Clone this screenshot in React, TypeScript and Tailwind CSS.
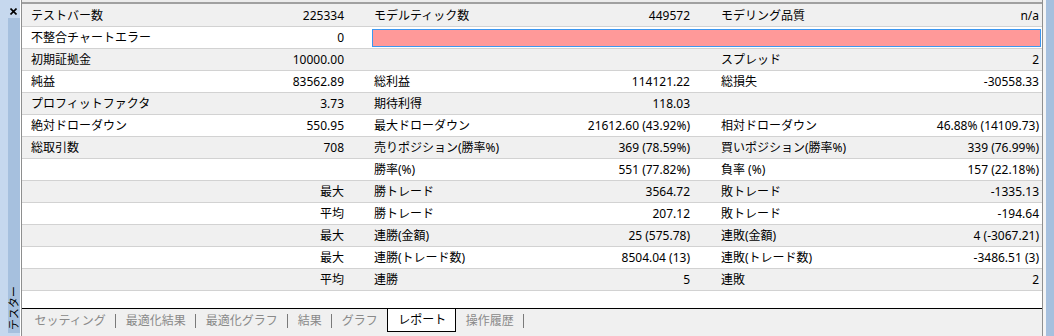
import React from 'react'

type Cell = [string, string]
type Row = { a: Cell; b?: Cell; c?: Cell; pink?: boolean }

const rows: Row[] = [
  { a: ['テストバー数', '225334'], b: ['モデルティック数', '449572'], c: ['モデリング品質', 'n/a'] },
  { a: ['不整合チャートエラー', '0'], pink: true },
  { a: ['初期証拠金', '10000.00'], b: ['', ''], c: ['スプレッド', '2'] },
  { a: ['純益', '83562.89'], b: ['総利益', '114121.22'], c: ['総損失', '-30558.33'] },
  { a: ['プロフィットファクタ', '3.73'], b: ['期待利得', '118.03'], c: ['', ''] },
  { a: ['絶対ドローダウン', '550.95'], b: ['最大ドローダウン', '21612.60 (43.92%)'], c: ['相対ドローダウン', '46.88% (14109.73)'] },
  { a: ['総取引数', '708'], b: ['売りポジション(勝率%)', '369 (78.59%)'], c: ['買いポジション(勝率%)', '339 (76.99%)'] },
  { a: ['', ''], b: ['勝率(%)', '551 (77.82%)'], c: ['負率 (%)', '157 (22.18%)'] },
  { a: ['', '最大'], b: ['勝トレード', '3564.72'], c: ['敗トレード', '-1335.13'] },
  { a: ['', '平均'], b: ['勝トレード', '207.12'], c: ['敗トレード', '-194.64'] },
  { a: ['', '最大'], b: ['連勝(金額)', '25 (575.78)'], c: ['連敗(金額)', '4 (-3067.21)'] },
  { a: ['', '最大'], b: ['連勝(トレード数)', '8504.04 (13)'], c: ['連敗(トレード数)', '-3486.51 (3)'] },
  { a: ['', '平均'], b: ['連勝', '5'], c: ['連敗', '2'] },
]

const tabs = ['セッティング', '最適化結果', '最適化グラフ', '結果', 'グラフ']

const App = () => {
  return (
    <div className="w-[1054px] h-[336px] flex bg-[#f0f0f0] overflow-hidden text-[12px] text-black font-['Noto_Sans','Noto_Sans_CJK_JP',sans-serif]">
      {/* left dock strip */}
      <div className="w-[20px] flex flex-col bg-[#c6d8ee]">
        <div className="h-[18px] flex items-start pt-[8px] pl-[10px]">
          <svg width="7" height="7" viewBox="0 0 7 7">
            <path d="M0.5 0.5 L6.5 6.5 M6.5 0.5 L0.5 6.5" stroke="#000" strokeWidth="1.6" />
          </svg>
        </div>
        <div className="flex-1 ml-[8px] bg-[#a6c0de] flex flex-col justify-end items-center pb-[3px]">
          <span className="[writing-mode:vertical-rl] [text-orientation:sideways] rotate-180 text-[11px] leading-[12px] text-black">テスター</span>
        </div>
        <div className="h-[3px]" />
      </div>
      <div className="w-[1px] bg-white" />

      {/* main panel */}
      <div className="w-[1022px] flex flex-col border-x border-[#8e8f8f]">
        <div className="h-[2px] bg-[#ececec]" />
        <div className="h-[2px] bg-[#a0a0a0]" />
        <div className="h-[1px] bg-[#f0f0f0]" />
        {rows.map((r, i) => (
          <div
            key={i}
            className={`h-[22px] grid grid-cols-[340px_346px_334px] items-center border-b border-[#d2d2d2] ${i % 2 === 0 ? 'bg-[#f0f0f0]' : 'bg-white'}`}
          >
            <div className="flex justify-between pl-[9px] pr-[18px]">
              <span>{r.a[0]}</span>
              <span>{r.a[1]}</span>
            </div>
            {r.pink ? (
              <div className="col-span-2 pl-[10px] pr-[1px]">
                <div className="h-[18px] bg-[#ff9999] border border-[#3c97f0]" />
              </div>
            ) : (
              <>
                <div className="flex justify-between pl-[12px] pr-[18px]">
                  <span>{r.b?.[0]}</span>
                  <span>{r.b?.[1]}</span>
                </div>
                <div className="flex justify-between pl-[13px] pr-[3px]">
                  <span>{r.c?.[0]}</span>
                  <span>{r.c?.[1]}</span>
                </div>
              </>
            )}
          </div>
        ))}
        <div className="h-[17px] bg-white" />

        {/* tab bar */}
        <div className="h-[24px] border-t border-black flex items-start pl-[3px] text-[#8a8a8a]">
          {tabs.map((t, i) => (
            <div key={t} className="h-[23px] flex items-center">
              <span className="px-[9.5px]">{t}</span>
              {i < tabs.length - 1 && <span className="w-[1px] h-[14px] bg-[#7a7a7a]" />}
            </div>
          ))}
          <div className="h-[23px] flex items-center border-x border-b border-black bg-white text-black pl-[10px] pr-[9px]">
            レポート
          </div>
          <div className="h-[23px] flex items-center">
            <span className="px-[9.5px]">操作履歴</span>
            <span className="w-[1px] h-[14px] bg-[#7a7a7a]" />
          </div>
        </div>
        <div className="flex-1 bg-[#f0f0f0]" />
      </div>

      {/* right dock strip */}
      <div className="w-[3px] bg-[#f4f4f4]" />
      <div className="flex-1 bg-[#a6c0de]" />
    </div>
  )
}

export default App
